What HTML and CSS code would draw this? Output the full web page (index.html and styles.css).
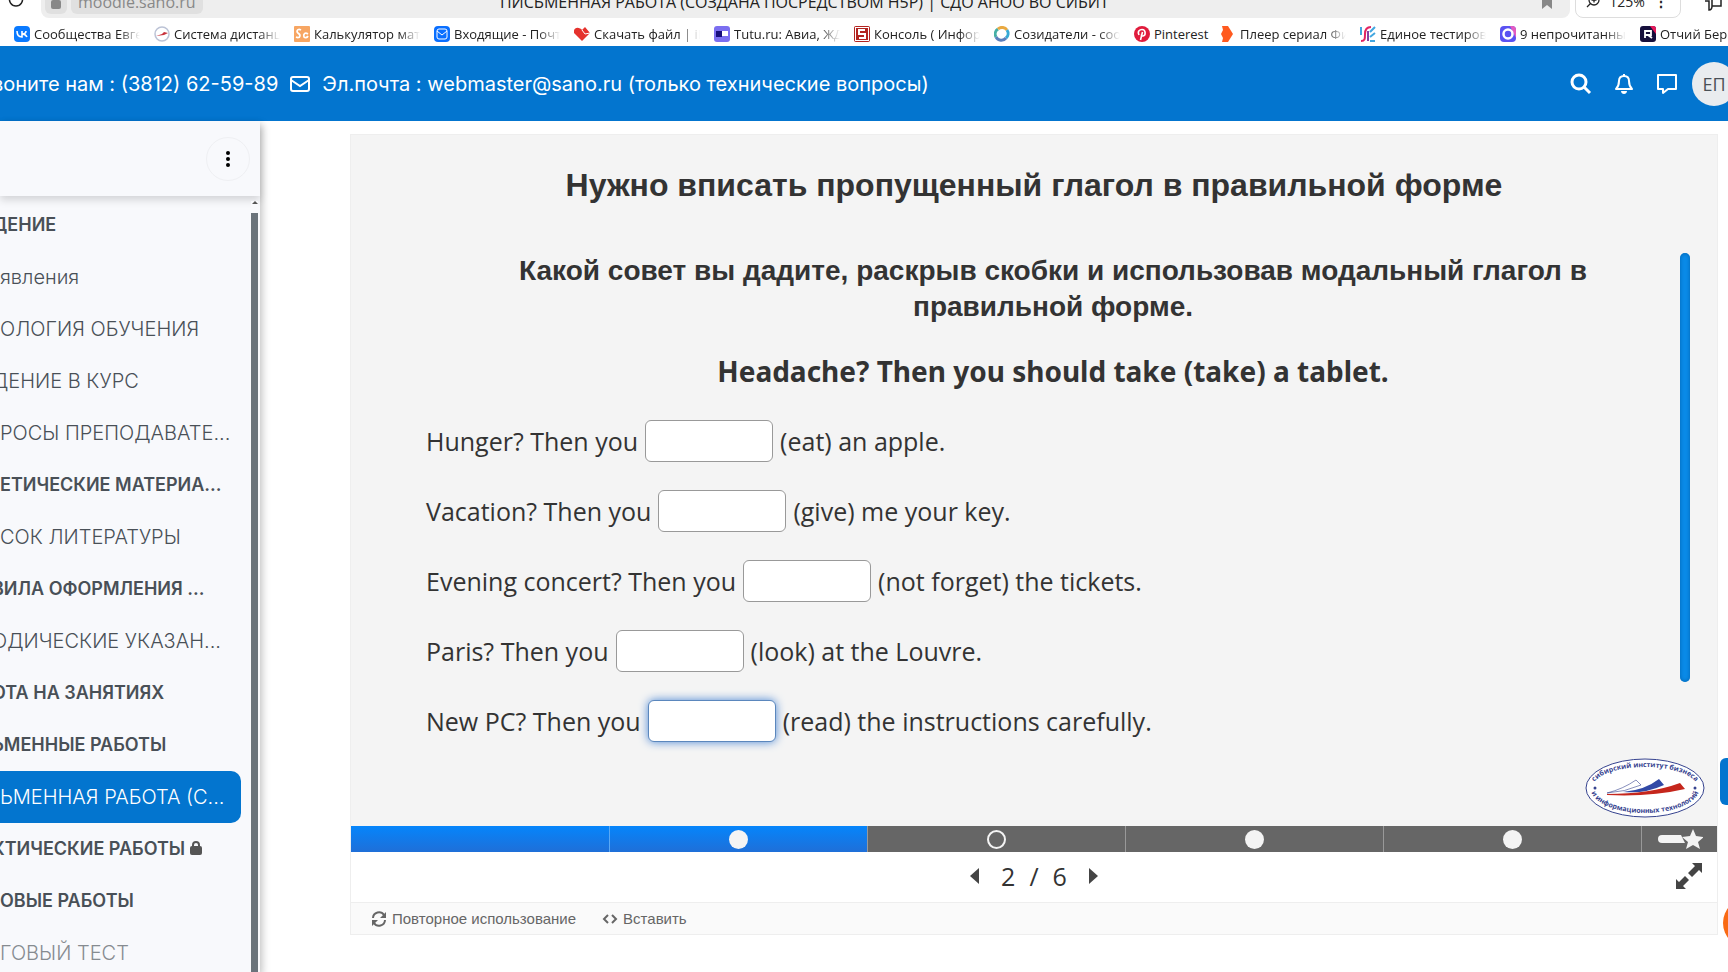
FILE: index.html
```
<!DOCTYPE html>
<html lang="ru">
<head>
<meta charset="utf-8">
<meta name="viewport" content="width=device-width, initial-scale=1">
<title>ПИСЬМЕННАЯ РАБОТА (СОЗДАНА ПОСРЕДСТВОМ H5P) | СДО АНОО ВО СИБИТ</title>
<link rel="stylesheet" href="styles.css">
</head>

<body>
<!-- browser address line -->
<div class="topline">
	<svg class="reload" width="16" height="16" viewBox="0 0 16 16"><path d="M2 3a6.500 6.500 0 1 0 12 0" fill="none" stroke="#222" stroke-width="1.500"/></svg>
	<div class="address">
		<span class="chip lock"><svg width="12" height="14" viewBox="0 0 12 14"><rect x="1" y="4" width="10" height="9" rx="2" fill="#888"/></svg></span>
		<span class="chip host">moodle.sano.ru</span>
		<span class="page-title">ПИСЬМЕННАЯ РАБОТА (СОЗДАНА ПОСРЕДСТВОМ H5P) | СДО АНОО ВО СИБИТ</span>
		<svg class="mark" width="10" height="16" viewBox="0 0 10 16"><path d="M0 0h10v16l-5-4-5 4z" fill="#888"/></svg>
	</div>
	<div class="zoom">
		<svg width="14" height="14" viewBox="0 0 14 14" fill="none" stroke="#222" stroke-width="1.300"><circle cx="8" cy="6" r="5"/><path d="M4.500 9.500L1 13M5.500 6h5M8 3.500v5"/></svg>
		<span>125%</span>
		<b>⋮</b>
	</div>
	<svg class="thumb" width="20" height="18" viewBox="0 0 20 18" fill="none" stroke="#222" stroke-width="1.500"><path d="M1 8h4v9c3 0 3-2 3-4M8 6h9v7H8zM11 6c0-3 2-5 6-4"/></svg>
</div>

<nav class="bookmarks">
	<a href="#"><svg viewBox="0 0 16 16"><rect width="16" height="16" rx="4" fill="#0a7aff"/><path d="M3 5c0 4 2 6 5 6V5M8 8c2 0 4-1 4-3M8 8c2 0 4 1 5 3" fill="none" stroke="#fff" stroke-width="1.600"/></svg><span>Сообщества Евге</span></a>
	<a href="#"><svg viewBox="0 0 16 16"><circle cx="8" cy="8" r="7" fill="#fff" stroke="#bcc3d6" stroke-width="1.500"/><path d="M2 10l6-2 2-2 4 1-4 2z" fill="#c8323c"/></svg><span>Система дистанц</span></a>
	<a href="#"><svg viewBox="0 0 16 16"><rect width="16" height="16" rx="1" fill="#f7a663"/><path d="M7 4c-4-2-5 2-2.500 3.500S6 13 2 11M14 8c-3-2-5 0-4 3 1 1 3 1 4-1" fill="none" stroke="#fff" stroke-width="1.700"/></svg><span>Калькулятор матр</span></a>
	<a href="#"><svg viewBox="0 0 16 16"><rect width="16" height="16" rx="4" fill="#0a6fff"/><rect x="3" y="3" width="10" height="10" rx="2" fill="none" stroke="#fff"/><path d="M3 5l5 4 5-4" fill="none" stroke="#fff"/></svg><span>Входящие - Почта</span></a>
	<a href="#"><svg viewBox="0 0 16 16"><path d="M8 15L0 7c-1-7 6-6 8-3l3-3 5 6z" fill="#e5322d"/><path d="M8 4l3 4 5-1" fill="none" stroke="#fff"/></svg><span>Скачать файл | iLo</span></a>
	<a href="#"><svg viewBox="0 0 16 16"><rect width="16" height="16" rx="3" fill="#7b6ef0"/><rect x="2" y="5" width="6" height="6" fill="#170e7c"/><rect x="8" y="5" width="6" height="5" fill="#fff"/></svg><span>Tutu.ru: Авиа, ЖД</span></a>
	<a href="#"><svg viewBox="0 0 16 16"><rect width="16" height="16" rx="2" fill="#b32420"/><rect x="1.500" y="1.500" width="13" height="13" fill="none" stroke="#fff"/><path d="M11 4H5v4h6v4H5" fill="none" stroke="#fff" stroke-width="2"/></svg><span>Консоль ( Информ</span></a>
	<a href="#"><svg viewBox="0 0 16 16" fill="none" stroke-width="3"><path d="M2 11a6 6 0 0 1 2-8" stroke="#46b0a6"/><path d="M4 3a6 6 0 0 1 9 1" stroke="#e9a941"/><path d="M13 4a6 6 0 0 1-1 8" stroke="#36a9d5"/><path d="M12 12a6 6 0 0 1-10-1" stroke="#5a7fbd"/></svg><span>Созидатели - соо</span></a>
	<a href="#" class="short"><svg viewBox="0 0 16 16"><circle cx="8" cy="8" r="8" fill="#e01b3c"/><path d="M5 9C3 5 6 3.500 8 3.500c4 0 4 6 1 6.500-1 0-2-1-1.500-1M8.500 6L6.500 14" fill="none" stroke="#fff" stroke-width="1.600"/></svg><span>Pinterest</span></a>
	<a href="#"><svg viewBox="0 0 16 16"><path d="M2 0h6l5 8-5 8H2l1-4-2-4 2-4z" fill="#ff5a1f"/></svg><span>Плеер сериал Фи</span></a>
	<a href="#"><svg viewBox="0 0 16 16" fill="none" stroke-width="2"><path d="M1 15c4 0 4-2 4-7s2-7 6-7" stroke="#e32462"/><path d="M1 1v8M10 6l5-5M10 11l5-4M10 15h5" stroke="#42a6e0"/><path d="M8 15V5" stroke="#8a3fa0"/></svg><span>Единое тестирова</span></a>
	<a href="#"><svg viewBox="0 0 16 16"><rect width="16" height="16" rx="4" fill="#5a52f2"/><path d="M10 0h2a4 4 0 0 1 4 4v8z" fill="#e45ac0"/><circle cx="8" cy="8" r="4.500" fill="none" stroke="#fff" stroke-width="2.500"/></svg><span>9 непрочитанных</span></a>
	<a href="#"><svg viewBox="0 0 16 16"><rect width="16" height="16" rx="3" fill="#160f3c"/><path d="M10 0h3a3 3 0 0 1 3 3v5z" fill="#e6195a"/><path d="M5 12V5h6v4H5M8 9l4 3" fill="none" stroke="#fff" stroke-width="1.800"/></svg><span>Отчий Берег</span></a>
</nav>

<header class="header">
	<span class="phone">воните нам : (3812) 62-59-89</span>
	<svg width="20" height="16" viewBox="0 0 20 16" fill="none" stroke="#fff" stroke-width="2"><rect x="1" y="1" width="18" height="14" rx="2"/><path d="M1 4l9 6 9-6"/></svg>
	<span class="mail">Эл.почта : webmaster@sano.ru (только технические вопросы)</span>
	<div class="header-tools">
		<button aria-label="Поиск"><svg width="22" height="22" viewBox="0 0 22 22" fill="none" stroke="#fff" stroke-width="3"><circle cx="9" cy="9" r="7"/><path d="M14 14l6 6"/></svg></button>
		<button aria-label="Уведомления"><svg width="20" height="22" viewBox="0 0 20 22"><path d="M2 16c2-2 3-4 3-8 0-3 2-5 5-5s5 2 5 5c0 4 1 6 3 8z" fill="none" stroke="#fff" stroke-width="2" stroke-linejoin="round"/><path d="M9 1h2v2H9zM7 18h6c0 4-6 4-6 0z" fill="#fff"/></svg></button>
		<button aria-label="Сообщения"><svg width="22" height="22" viewBox="0 0 22 22"><path d="M2 2h18v14h-8l-5 4v-4H2z" fill="none" stroke="#fff" stroke-width="2" stroke-linejoin="round"/></svg></button>
		<button class="avatar">ЕП</button>
	</div>
</header>

<div class="page">
	<aside class="sidebar">
		<div class="sidebar-head">
			<button class="dots" aria-label="Меню"><svg width="6" height="18" viewBox="0 0 6 18"><circle cx="3" cy="3" r="2"/><circle cx="3" cy="9" r="2"/><circle cx="3" cy="15" r="2"/></svg></button>
		</div>
		<div class="sidebar-body">
			<ul class="course-index">
				<li><a href="#" class="section cut">ДЕНИЕ</a></li>
				<li><a href="#">явления</a></li>
				<li><a href="#">ОЛОГИЯ ОБУЧЕНИЯ</a></li>
				<li><a href="#" class="cut">ДЕНИЕ В КУРС</a></li>
				<li><a href="#">РОСЫ ПРЕПОДАВАТЕ...</a></li>
				<li><a href="#" class="section">ЕТИЧЕСКИЕ МАТЕРИА...</a></li>
				<li><a href="#">СОК ЛИТЕРАТУРЫ</a></li>
				<li><a href="#" class="section cut">ВИЛА ОФОРМЛЕНИЯ ...</a></li>
				<li><a href="#" class="cut">ОДИЧЕСКИЕ УКАЗАН...</a></li>
				<li><a href="#" class="section cut">ОТА НА ЗАНЯТИЯХ</a></li>
				<li><a href="#" class="section cut">ЬМЕННЫЕ РАБОТЫ</a></li>
				<li class="active"><a href="#">ЬМЕННАЯ РАБОТА (С...</a></li>
				<li><a href="#" class="section cut">КТИЧЕСКИЕ РАБОТЫ <svg width="12" height="14" viewBox="0 0 12 14"><rect y="5" width="12" height="9" rx="2" fill="#555"/><path d="M3 6V4a3 3 0 0 1 6 0v2" fill="none" stroke="#555" stroke-width="2"/></svg></a></li>
				<li><a href="#" class="section">ОВЫЕ РАБОТЫ</a></li>
				<li><a href="#" class="dim">ГОВЫЙ ТЕСТ</a></li>
			</ul>
			<div class="scroller"></div>
		</div>
	</aside>

	<main class="content">
		<section class="h5p">
			<div class="slide">
				<h1>Нужно вписать пропущенный глагол в правильной форме</h1>
				<div class="slide-body">
					<form class="task">
						<h2>Какой совет вы дадите, раскрыв скобки и использовав модальный глагол в правильной форме.</h2>
						<h2 class="latin">Headache? Then you should take (take) a tablet.</h2>
						<p><label for="a1">Hunger? Then you</label> <input type="text" id="a1"> (eat) an apple.</p>
						<p><label for="a2">Vacation? Then you</label> <input type="text" id="a2"> (give) me your key.</p>
						<p><label for="a3">Evening concert? Then you</label> <input type="text" id="a3"> (not forget) the tickets.</p>
						<p><label for="a4">Paris? Then you</label> <input type="text" id="a4"> (look) at the Louvre.</p>
						<p><label for="a5">New PC? Then you</label> <input type="text" id="a5" class="current"> (read) the instructions carefully.</p>
					</form>
					<div class="track"><div class="thumb-bar"></div></div>
				</div>
				<svg class="logo" width="120" height="60" viewBox="0 0 120 60">
					<defs>
						<path id="arcTop" d="M7 30A53 21 0 0 1 113 30"/>
						<path id="arcBottom" d="M6 31A54 24 0 0 0 114 31"/>
					</defs>
					<ellipse cx="60" cy="30" rx="59" ry="29" fill="#fff" stroke="#36438f"/>
					<text><textPath href="#arcTop" startOffset="50%" text-anchor="middle">сибирский институт бизнеса</textPath></text>
					<text><textPath href="#arcBottom" startOffset="50%" text-anchor="middle">и информационных технологий</textPath></text>
					<circle cx="10" cy="30" r="1.500" fill="#36438f"/><circle cx="110" cy="30" r="1.500" fill="#36438f"/>
					<path d="M22 35Q38 31 51 22L56 27Q40 34 22 35z" fill="#fff" stroke="#36438f" stroke-width=".6"/>
					<path d="M38 34Q60 32 74 21L79 27Q60 36 38 34z" fill="#3149a6"/>
					<path d="M22 36Q65 36 95 25L100 31Q66 39 22 37z" fill="#c5261c"/>
				</svg>
			</div>

			<div class="progress">
				<a href="#" class="done" aria-label="1"></a>
				<a href="#" class="done" aria-label="2"><i></i></a>
				<a href="#" aria-label="3"><i class="open"></i></a>
				<a href="#" aria-label="4"><i></i></a>
				<a href="#" aria-label="5"><i></i></a>
				<a href="#" aria-label="6"><svg width="46" height="20" viewBox="0 0 46 20" fill="#f4f4f4"><path d="M5 6h19l4 8H5a4 4 0 0 1 0-8z"/><path d="M36 0l3 7 8 1-6 5 2 7-7-4-7 4 2-7-6-5 8-1z"/></svg></a>
			</div>

			<div class="pager">
				<div class="pages">
					<button aria-label="Назад"><svg width="10" height="16" viewBox="0 0 10 16"><path d="M9 0v16L0 8z" fill="#444"/></svg></button>
					<span>2</span><span>/</span><span>6</span>
					<button aria-label="Вперед"><svg width="10" height="16" viewBox="0 0 10 16"><path d="M1 0v16l9-8z" fill="#444"/></svg></button>
				</div>
				<button class="full" aria-label="На весь экран"><svg width="28" height="28" viewBox="0 0 28 28" fill="#444"><path d="M17 1h10v10l-3-3-7 7-4-4 7-7zM1 27V17l3 3 6-6 4 4-6 6 3 3z"/></svg></button>
			</div>

			<div class="actions">
				<button><svg width="16" height="16" viewBox="0 0 16 16"><path d="M2 7a6 6 0 0 1 11-3M14 9a6 6 0 0 1-11 3" fill="none" stroke="#666" stroke-width="2"/><path d="M15 1v6h-6zM1 15V9h6z" fill="#666"/></svg>Повторное использование</button>
				<button><svg width="16" height="16" viewBox="0 0 16 16" fill="none" stroke="#666" stroke-width="2"><path d="M6 4L2 8l4 4M10 4l4 4-4 4"/></svg>Вставить</button>
			</div>
		</section>
	</main>
</div>

<button class="drawer" aria-label="Открыть блоки"></button>
<button class="help" aria-label="Помощь"></button>
</body>
</html>
```
FILE: styles.css
```
* {
	box-sizing: border-box;
}
body {
	margin: 0;
	height: 100vh;
	overflow: hidden;
	display: flex;
	flex-direction: column;
	background: #fff;
	color: #333;
	font-family: Inter, "Liberation Sans", sans-serif;
}
a {
	color: inherit;
	text-decoration: none;
}
button {
	border: 0;
	padding: 0;
	background: none;
	font: inherit;
	color: inherit;
}
svg {
	flex: none;
}

/* browser line: only its lower part is on screen */
.topline {
	flex: none;
	height: 18px;
	display: flex;
	align-items: flex-end;
	padding-left: 8px;
	font: 16px/20px "Open Sans", sans-serif;
	color: #222;
	overflow: hidden;
}
.reload {
	margin: 0 17px 8px 0;
}
.address {
	flex: 1;
	height: 40px;
	display: flex;
	align-items: flex-end;
	padding: 0 18px 4px 4px;
	background: #eee;
	border-radius: 8px;
}
.chip {
	height: 28px;
	padding: 0 7px 2px;
	background: #e0e0e0;
	border-radius: 6px;
	color: #888;
	display: flex;
	align-items: flex-end;
	margin-right: 4px;
}
.lock {
	padding: 0 5px 4px;
}
.page-title {
	flex: 1;
	text-align: center;
	margin-bottom: 2px;
	padding-right: 140px;
	white-space: nowrap;
}
.mark {
	margin-bottom: 5px;
}
.zoom {
	height: 40px;
	width: 106px;
	margin: 0 23px 0 5px;
	padding: 0 12px 5px 10px;
	border: 1px solid #ddd;
	border-radius: 8px;
	display: flex;
	align-items: flex-end;
	justify-content: space-between;
	font-size: 14px;
}
.zoom svg {
	margin-bottom: 4px;
}
.thumb {
	margin: 0 4px 7px 0;
}

.bookmarks {
	flex: none;
	height: 28px;
	padding: 3px 0 0 14px;
	display: flex;
	align-items: center;
	font: 13px/20px "Open Sans", sans-serif;
	color: #222;
	overflow: hidden;
}
.bookmarks a {
	flex: none;
	width: 140px;
	padding-right: 14px;
	display: flex;
	align-items: center;
	gap: 4px;
}
.bookmarks svg {
	width: 16px;
	height: 16px;
}
.bookmarks span {
	flex: 1;
	overflow: hidden;
	white-space: nowrap;
	-webkit-mask-image: linear-gradient(to right, #000 80%, transparent);
	mask-image: linear-gradient(to right, #000 80%, transparent);
}
.bookmarks .short {
	width: 86px;
	padding-right: 0;
}
.bookmarks .short span {
	-webkit-mask-image: none;
	mask-image: none;
}

.header {
	flex: none;
	height: 75px;
	display: flex;
	align-items: center;
	background: #0375cf;
	color: #fff;
	font-size: 20px;
	white-space: nowrap;
}
.phone {
	margin: 0 12px 0 -8px;
}
.mail {
	margin-left: 12px;
}
.header-tools {
	margin: 0 -8px 0 auto;
	display: flex;
	align-items: center;
	gap: 22px;
}
.header-tools svg {
	display: block;
}
.avatar {
	width: 44px;
	height: 44px;
	margin-left: -8px;
	border-radius: 50%;
	background: #e9ecef;
	color: #495057;
	font: 18px "Open Sans", sans-serif;
}

.page {
	flex: 1;
	min-height: 0;
	display: flex;
}
.sidebar {
	flex: none;
	width: 260px;
	display: flex;
	flex-direction: column;
	background: #f8f9fc;
	box-shadow: 2px 4px 8px rgba(0, 0, 0, .25);
}
.sidebar-head {
	flex: none;
	height: 75px;
	padding-right: 10px;
	display: flex;
	align-items: center;
	justify-content: flex-end;
	box-shadow: 0 4px 8px rgba(0, 0, 0, .15);
}
.dots {
	width: 44px;
	height: 44px;
	border: 1px solid #eff0f3;
	border-radius: 50%;
	display: flex;
	align-items: center;
	justify-content: center;
}
.sidebar-body {
	flex: 1;
	min-height: 0;
	display: flex;
	overflow: hidden;
}
.course-index {
	flex: 1;
	margin: 3px 10px 0 0;
	padding: 0;
	list-style: none;
	color: #495057;
	font-size: 20px;
	font-weight: 300;
	line-height: 52px;
	white-space: nowrap;
}
.course-index a {
	display: block;
}
.course-index .section {
	font-size: 18px;
	font-weight: 600;
}
.course-index .cut {
	margin-left: -8px;
}
.course-index .active {
	background: #0375cf;
	color: #fff;
	border-radius: 0 10px 10px 0;
}
.course-index .dim {
	color: #868b90;
}
/* arrow over the bar */
.scroller {
	width: 7px;
	margin: 5px 2px 0 0;
	border-top: 12px solid #f8f9fc;
	background: #6a737b;
	position: relative;
}
.scroller::before {
	content: "";
	position: absolute;
	top: -12px;
	left: 1px;
	border: 3px solid transparent;
	border-top: 0;
	border-bottom-color: #555;
}

.content {
	flex: 1;
	min-width: 0;
	padding: 13px 10px 0 90px;
}
.h5p {
	border: 1px solid #eee;
}
.slide {
	background: #f4f4f4;
	padding: 28px 0 8px;
	display: flex;
	flex-direction: column;
}
.slide h1 {
	margin: 0 0 46px;
	text-align: center;
	font: bold 32px/44px "Liberation Sans", sans-serif;
}
.slide-body {
	display: flex;
	padding: 0 27px 0 75px;
}
.task {
	flex: 1;
	font: 25px/42px "Open Sans", sans-serif;
}
.task h2 {
	margin: 0 0 28px;
	padding: 0 40px;
	text-align: center;
	font: bold 28px/36px "Liberation Sans", sans-serif;
}
.task .latin {
	margin-bottom: 31px;
	font-family: "Noto Sans", sans-serif;
}
.task p {
	margin: 0 0 28px;
	display: flex;
	gap: 7px;
}
.task p:last-child {
	margin-bottom: 16px;
}
.task input {
	width: 128px;
	height: 42px;
	border: 1px solid #999;
	border-radius: 6px;
	background: #fff;
	font: inherit;
}
.task .current {
	border-color: #5b87bd;
	box-shadow: 0 0 10px #4a86d4;
	outline: none;
}
.track {
	width: 10px;
}
.thumb-bar {
	height: 85%;
	border-radius: 5px;
	background: #0a8be8;
	box-shadow: inset 0 0 4px #0063b0;
}
.logo {
	align-self: flex-end;
	margin-right: 12px;
}
.logo text {
	font: bold 7px "Open Sans", sans-serif;
	fill: #36438f;
}

.progress {
	height: 26px;
	display: grid;
	grid-template-columns: repeat(5, 1fr) 76px;
}
.progress a {
	display: flex;
	align-items: center;
	justify-content: center;
	background: #666;
	border-left: 1px solid #999;
}
.progress a:first-child {
	border-left: 0;
}
.progress .done {
	background: linear-gradient(#0585fb, #1f6fd8);
	border-color: #5aa9f5;
}
.progress i {
	width: 19px;
	height: 19px;
	border-radius: 50%;
	background: #f4f4f4;
}
.progress .open {
	background: none;
	border: 2px solid #f4f4f4;
}

.pager {
	height: 50px;
	padding-bottom: 2px;
	display: grid;
	grid-template-columns: 1fr auto 1fr;
	align-items: center;
	font: 25px/36px "Open Sans", sans-serif;
}
.pages {
	grid-column: 2;
	display: flex;
	align-items: center;
	gap: 14px;
}
.pages button {
	padding: 0 7px;
}
.pager svg {
	display: block;
}
.full {
	justify-self: end;
	margin-right: 14px;
}
.actions {
	height: 32px;
	padding-left: 20px;
	display: flex;
	align-items: center;
	gap: 26px;
	background: #fafafa;
	border-top: 1px solid #eee;
	color: #666;
	font: 15px "Liberation Sans", sans-serif;
}
.actions button {
	display: flex;
	align-items: center;
	gap: 5px;
}

/* floating buttons, half hidden behind the right edge */
.drawer {
	position: fixed;
	right: -40px;
	bottom: 167px;
	width: 48px;
	height: 47px;
	border-radius: 6px;
	background: #0375cf;
}
.help {
	position: fixed;
	right: -45px;
	bottom: 24px;
	width: 50px;
	height: 50px;
	border-radius: 50%;
	background: #f96a13;
}
```
